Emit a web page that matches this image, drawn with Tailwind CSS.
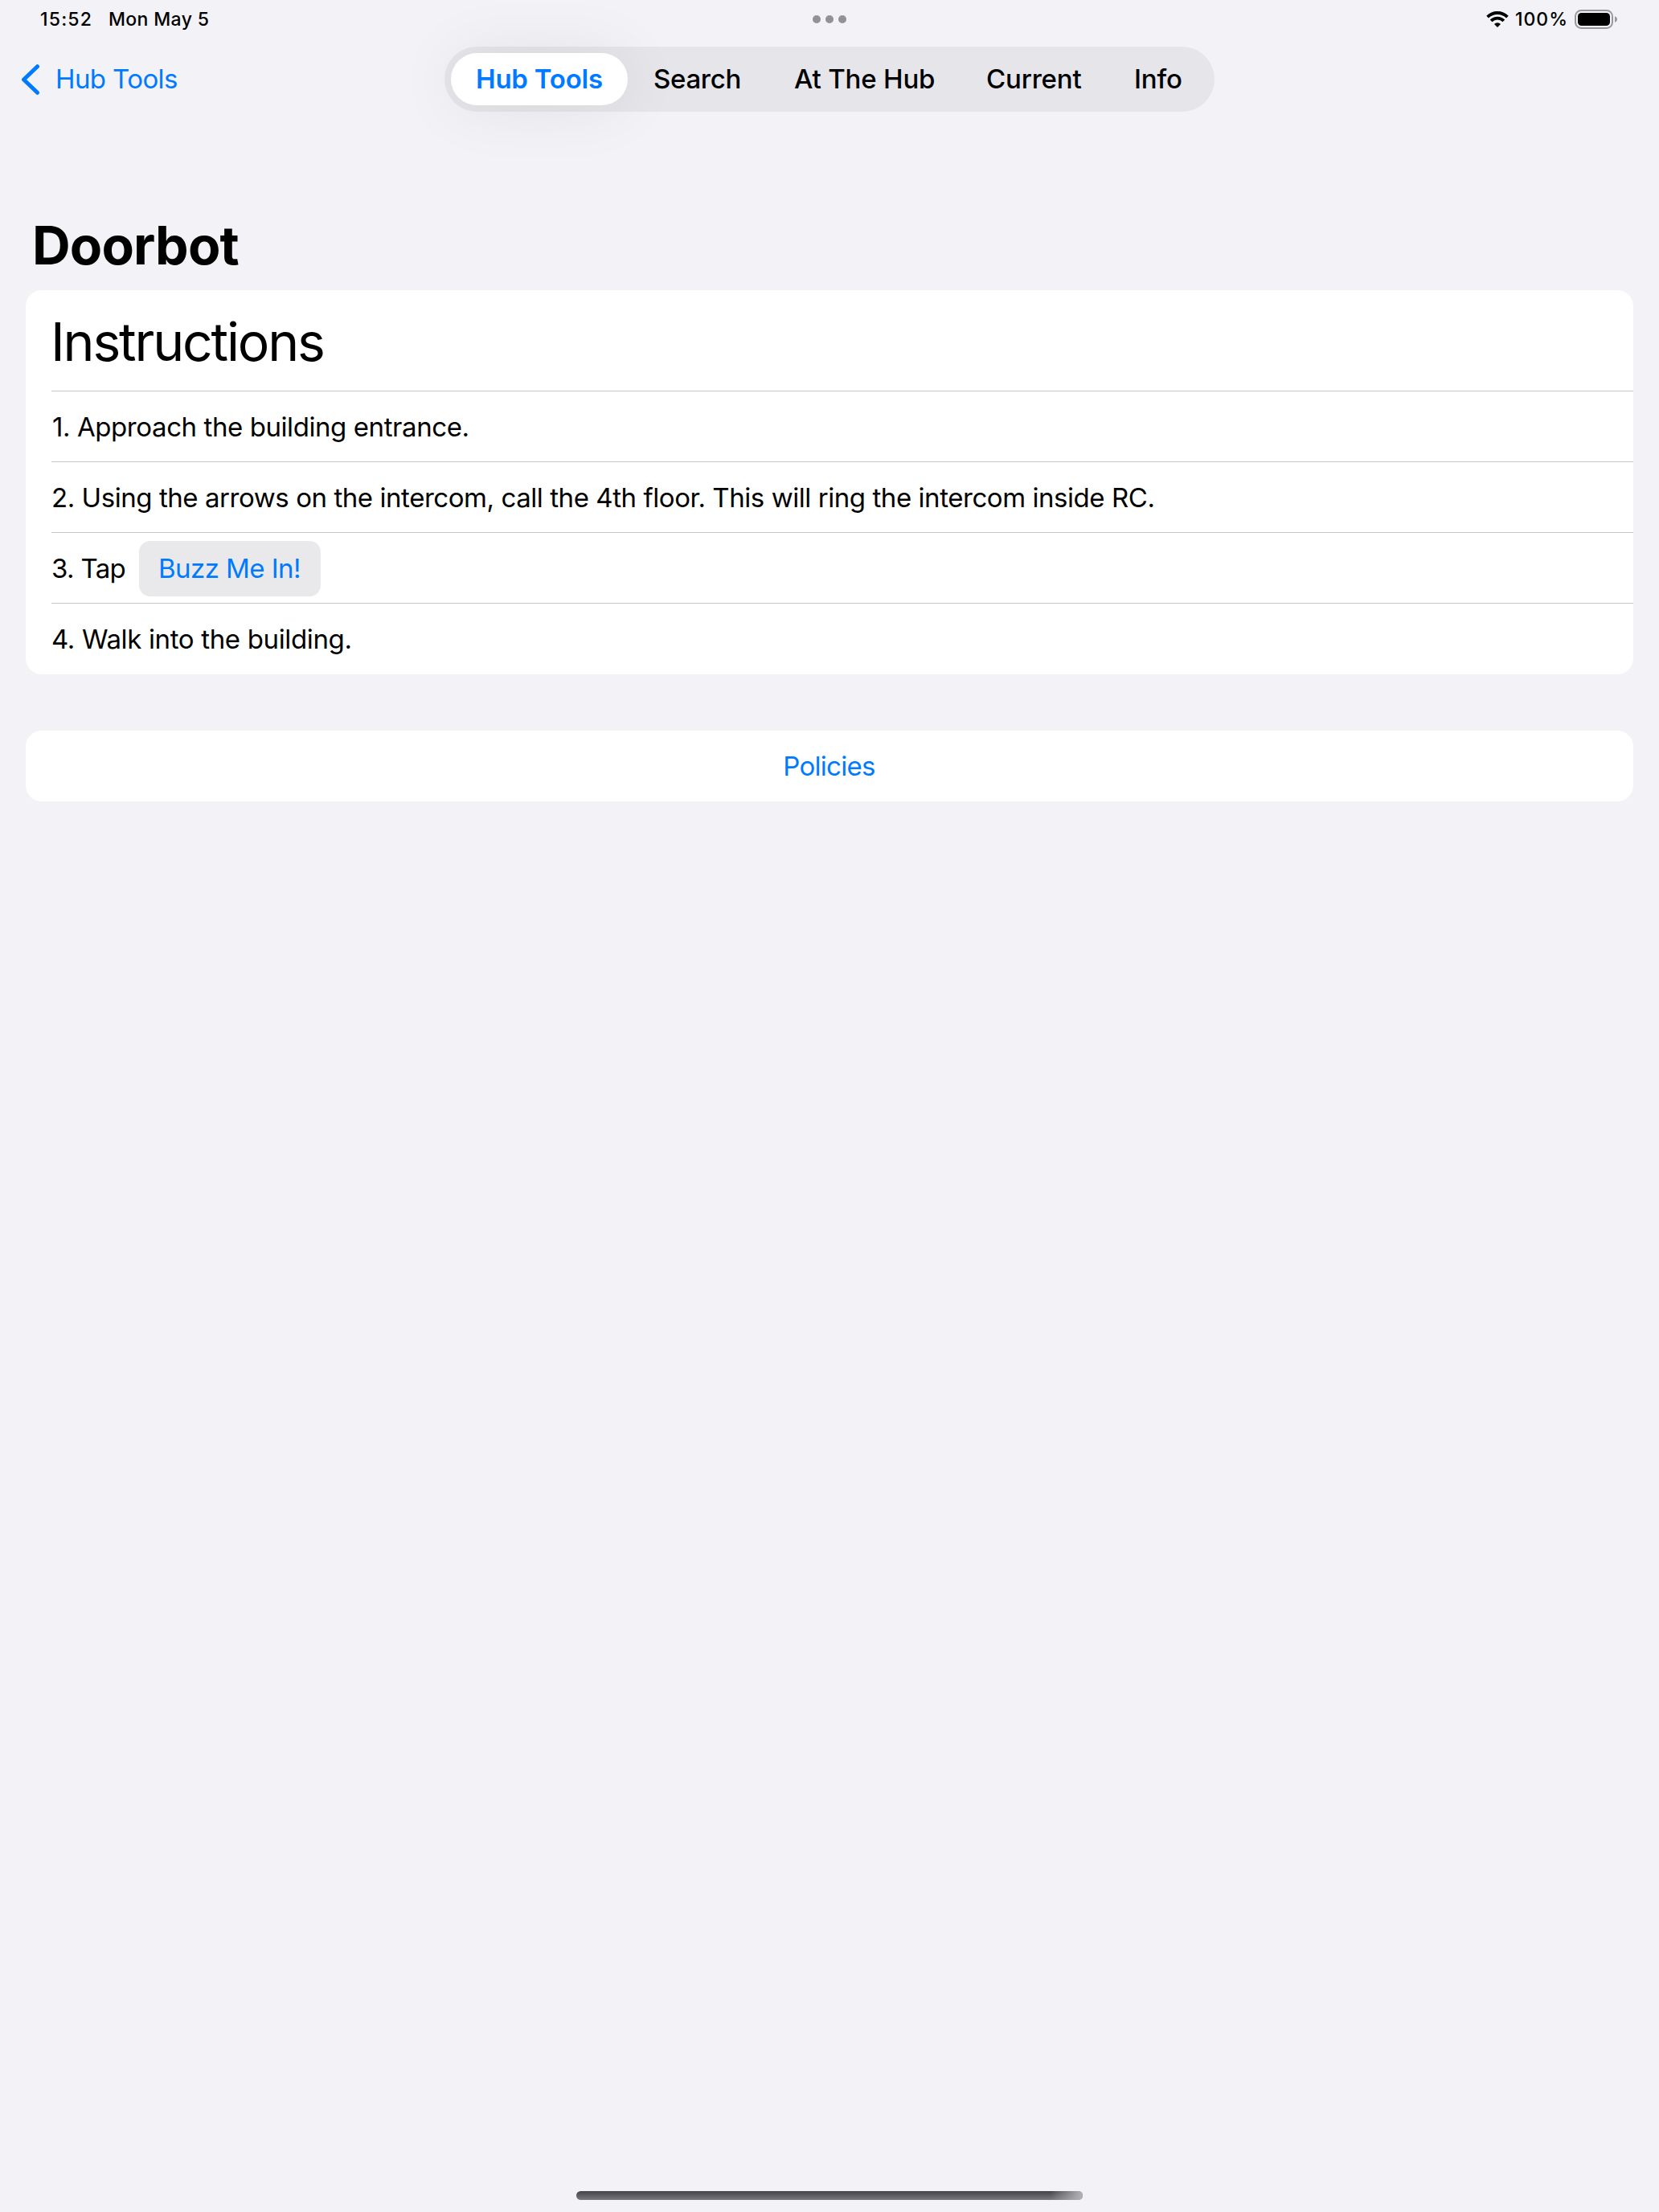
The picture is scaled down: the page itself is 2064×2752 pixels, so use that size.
<!DOCTYPE html>
<html lang="en">
<head>
<meta charset="utf-8">
<title>Doorbot</title>
<script src="https://cdn.jsdelivr.net/npm/@tailwindcss/browser@4"></script>
</head>
<body class="flex h-[2752px] w-[2064px] flex-col overflow-hidden bg-[#f2f2f7] font-[Inter,sans-serif] text-[33px] leading-none whitespace-nowrap text-black">
  <!-- Status bar -->
  <div class="grid h-12 shrink-0 grid-cols-3 items-center text-[23px] font-medium">
    <div class="flex items-center gap-[19px] pl-[50px]">
      <span class="w-[66px] tracking-[1.2px]">15:52</span>
      <span class="tracking-[0.35px]">Mon May 5</span>
    </div>
    <div class="flex justify-center gap-1.5">
      <span class="size-2.5 rounded-full bg-[#929196]"></span>
      <span class="size-2.5 rounded-full bg-[#929196]"></span>
      <span class="size-2.5 rounded-full bg-[#929196]"></span>
    </div>
    <div class="flex items-center justify-end pr-[51px]">
      <svg class="mr-2 h-5 w-7" viewBox="0 0 28 20">
        <g fill="none" stroke="#000" stroke-width="3.8">
          <path d="M1.6 7.1a17.6 17.6 0 0 1 24.8 0"/>
          <path d="M6.1 11.9a11.2 11.2 0 0 1 15.8 0"/>
        </g>
        <path d="M14 20l-4-4.1a5.8 5.8 0 0 1 8 0z"/>
      </svg>
      <span class="mr-2 tracking-[1px]">100%</span>
      <svg class="h-6 w-[54px]" viewBox="0 0 54 24">
        <rect x="1" y="1" width="46" height="22" rx="7.2" fill="none" stroke="#98979c" stroke-width="2"/>
        <rect x="4" y="4" width="40" height="16" rx="4.6"/>
        <path d="M50 8.200c1.800.700 3 2.100 3 3.800s-1.200 3.100-3 3.800z" fill="#98979c"/>
      </svg>
    </div>
  </div>

  <!-- Navigation bar -->
  <header class="mt-2.5 flex h-[81px] shrink-0 items-center">
    <a class="flex w-[553px] items-center gap-[17px] pl-[26px] text-[#007aff]">
      <svg class="h-[38px] w-[26px]" viewBox="0 0 26 38" fill="none" stroke="currentColor" stroke-width="5" stroke-linecap="round" stroke-linejoin="round">
        <path d="M20.500 2.700L3.500 19l17 16.300"/>
      </svg>
      <span class="tracking-[-0.6px]">Hub Tools</span>
    </a>
    <nav class="flex h-[81px] w-[958px] items-center rounded-full bg-[#e5e5ea] p-2 font-medium">
      <a class="flex h-[65px] w-[220px] items-center rounded-full bg-white pl-[31px] font-semibold tracking-[-0.22px] text-[#007aff] shadow-[0_2px_80px_rgba(0,0,0,0.08)]">Hub Tools</a>
      <a class="w-[174px] pl-8 tracking-[-0.31px]">Search</a>
      <a class="w-[240px] pl-[33px] tracking-[-0.18px]">At The Hub</a>
      <a class="w-[184px] pl-8 tracking-[-0.2px]">Current</a>
      <a class="w-[124px] pl-[32px] tracking-[-0.16px]">Info</a>
    </nav>
  </header>

  <main class="flex grow flex-col px-8 pt-[126px]">
    <h1 class="flex h-20 items-center pl-2 text-[66px] font-bold tracking-[-0.85px]">Doorbot</h1>

    <section class="mt-4 flex flex-col rounded-[20px] bg-white pl-8">
      <h2 class="flex h-[126px] items-center border-b border-[#c6c6c8] pt-[2px] text-[66px] tracking-[-2.17px]"><span class="-ml-px">Instructions</span></h2>
      <div class="flex h-[88px] items-center border-b border-[#c6c6c8] pt-[2px] pl-px tracking-[-0.42px]">1. Approach the building entrance.</div>
      <div class="flex h-[88px] items-center border-b border-[#c6c6c8] pt-[2px] tracking-[-0.44px]">2. Using the arrows on the intercom, call the 4th floor. This will ring the intercom inside RC.</div>
      <div class="flex h-[88px] items-center border-b border-[#c6c6c8] pt-[2px]">
        <span class="w-[109px] tracking-[-0.66px]">3. Tap</span>
        <button class="flex h-[69px] w-[226px] items-center rounded-[14px] bg-[#e9e9eb] pl-6 tracking-[-0.55px] text-[#007aff]">Buzz Me In!</button>
      </div>
      <div class="flex h-[88px] items-center tracking-[-0.35px]">4. Walk into the building.</div>
    </section>

    <a class="mt-[70px] flex h-[88px] items-center justify-center rounded-[20px] bg-white pr-px tracking-[-0.7px] text-[#007aff]">Policies</a>
  </main>

  <!-- Home indicator -->
  <div class="mb-[15px] ml-[717px] h-[11px] w-[630px] shrink-0 overflow-hidden rounded-full bg-linear-to-b from-[#454549] to-[#7a7a7e]">
    <div class="ml-auto h-full w-10 bg-linear-to-r from-transparent to-[#b4b4b8]"></div>
  </div>
</body>
</html>
